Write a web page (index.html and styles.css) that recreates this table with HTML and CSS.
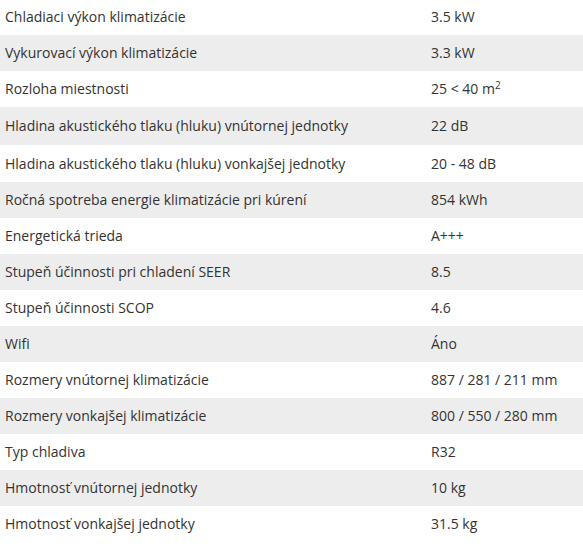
FILE: index.html
```html
<!DOCTYPE html>
<html lang="sk">
<head>
<meta charset="utf-8">
<link rel="stylesheet" href="styles.css">
</head>
<body>
<div class="params">
  <div class="row first"><div class="k">Chladiaci výkon klimatizácie</div><div class="v">3.5 kW</div></div>
  <div class="row alt"><div class="k">Vykurovací výkon klimatizácie</div><div class="v">3.3 kW</div></div>
  <div class="row"><div class="k">Rozloha miestnosti</div><div class="v">25 &lt; 40 m<sup>2</sup></div></div>
  <div class="row alt h38"><div class="k">Hladina akustického tlaku (hluku) vnútornej jednotky</div><div class="v">22 dB</div></div>
  <div class="row h37"><div class="k">Hladina akustického tlaku (hluku) vonkajšej jednotky</div><div class="v">20 - 48 dB</div></div>
  <div class="row alt"><div class="k">Ročná spotreba energie klimatizácie pri kúrení</div><div class="v">854 kWh</div></div>
  <div class="row"><div class="k">Energetická trieda</div><div class="v">A+++</div></div>
  <div class="row alt"><div class="k">Stupeň účinnosti pri chladení SEER</div><div class="v">8.5</div></div>
  <div class="row"><div class="k">Stupeň účinnosti SCOP</div><div class="v">4.6</div></div>
  <div class="row alt"><div class="k">Wifi</div><div class="v">Áno</div></div>
  <div class="row"><div class="k">Rozmery vnútornej klimatizácie</div><div class="v">887 / 281 / 211 mm</div></div>
  <div class="row alt"><div class="k">Rozmery vonkajšej klimatizácie</div><div class="v">800 / 550 / 280 mm</div></div>
  <div class="row"><div class="k">Typ chladiva</div><div class="v">R32</div></div>
  <div class="row alt"><div class="k">Hmotnosť vnútornej jednotky</div><div class="v">10 kg</div></div>
  <div class="row"><div class="k">Hmotnosť vonkajšej jednotky</div><div class="v">31.5 kg</div></div>
</div>
</body>
</html>
```
FILE: styles.css
```css
html, body {
  margin: 0;
  padding: 0;
  background: #ffffff;
}
body {
  font-family: "Open Sans", "Noto Sans", sans-serif;
  font-size: 14px;
  color: #333333;
}
.params {
  display: flex;
  flex-direction: column;
  width: 583px;
}
.row {
  display: grid;
  grid-template-columns: 426px 1fr;
  height: 36px;
  align-items: center;
  line-height: 20px;
}
.row.first {
  height: 35px;
}
.row.h38 { height: 38px; }
.row.h37 { height: 37px; }
.row.alt {
  background: #ededed;
}
.k, .v {
  padding-left: 5px;
  white-space: nowrap;
}
.first .k, .first .v {
  margin-top: -1px;
}
sup {
  font-size: 10px;
  line-height: 0;
  vertical-align: 5px;
}
```
